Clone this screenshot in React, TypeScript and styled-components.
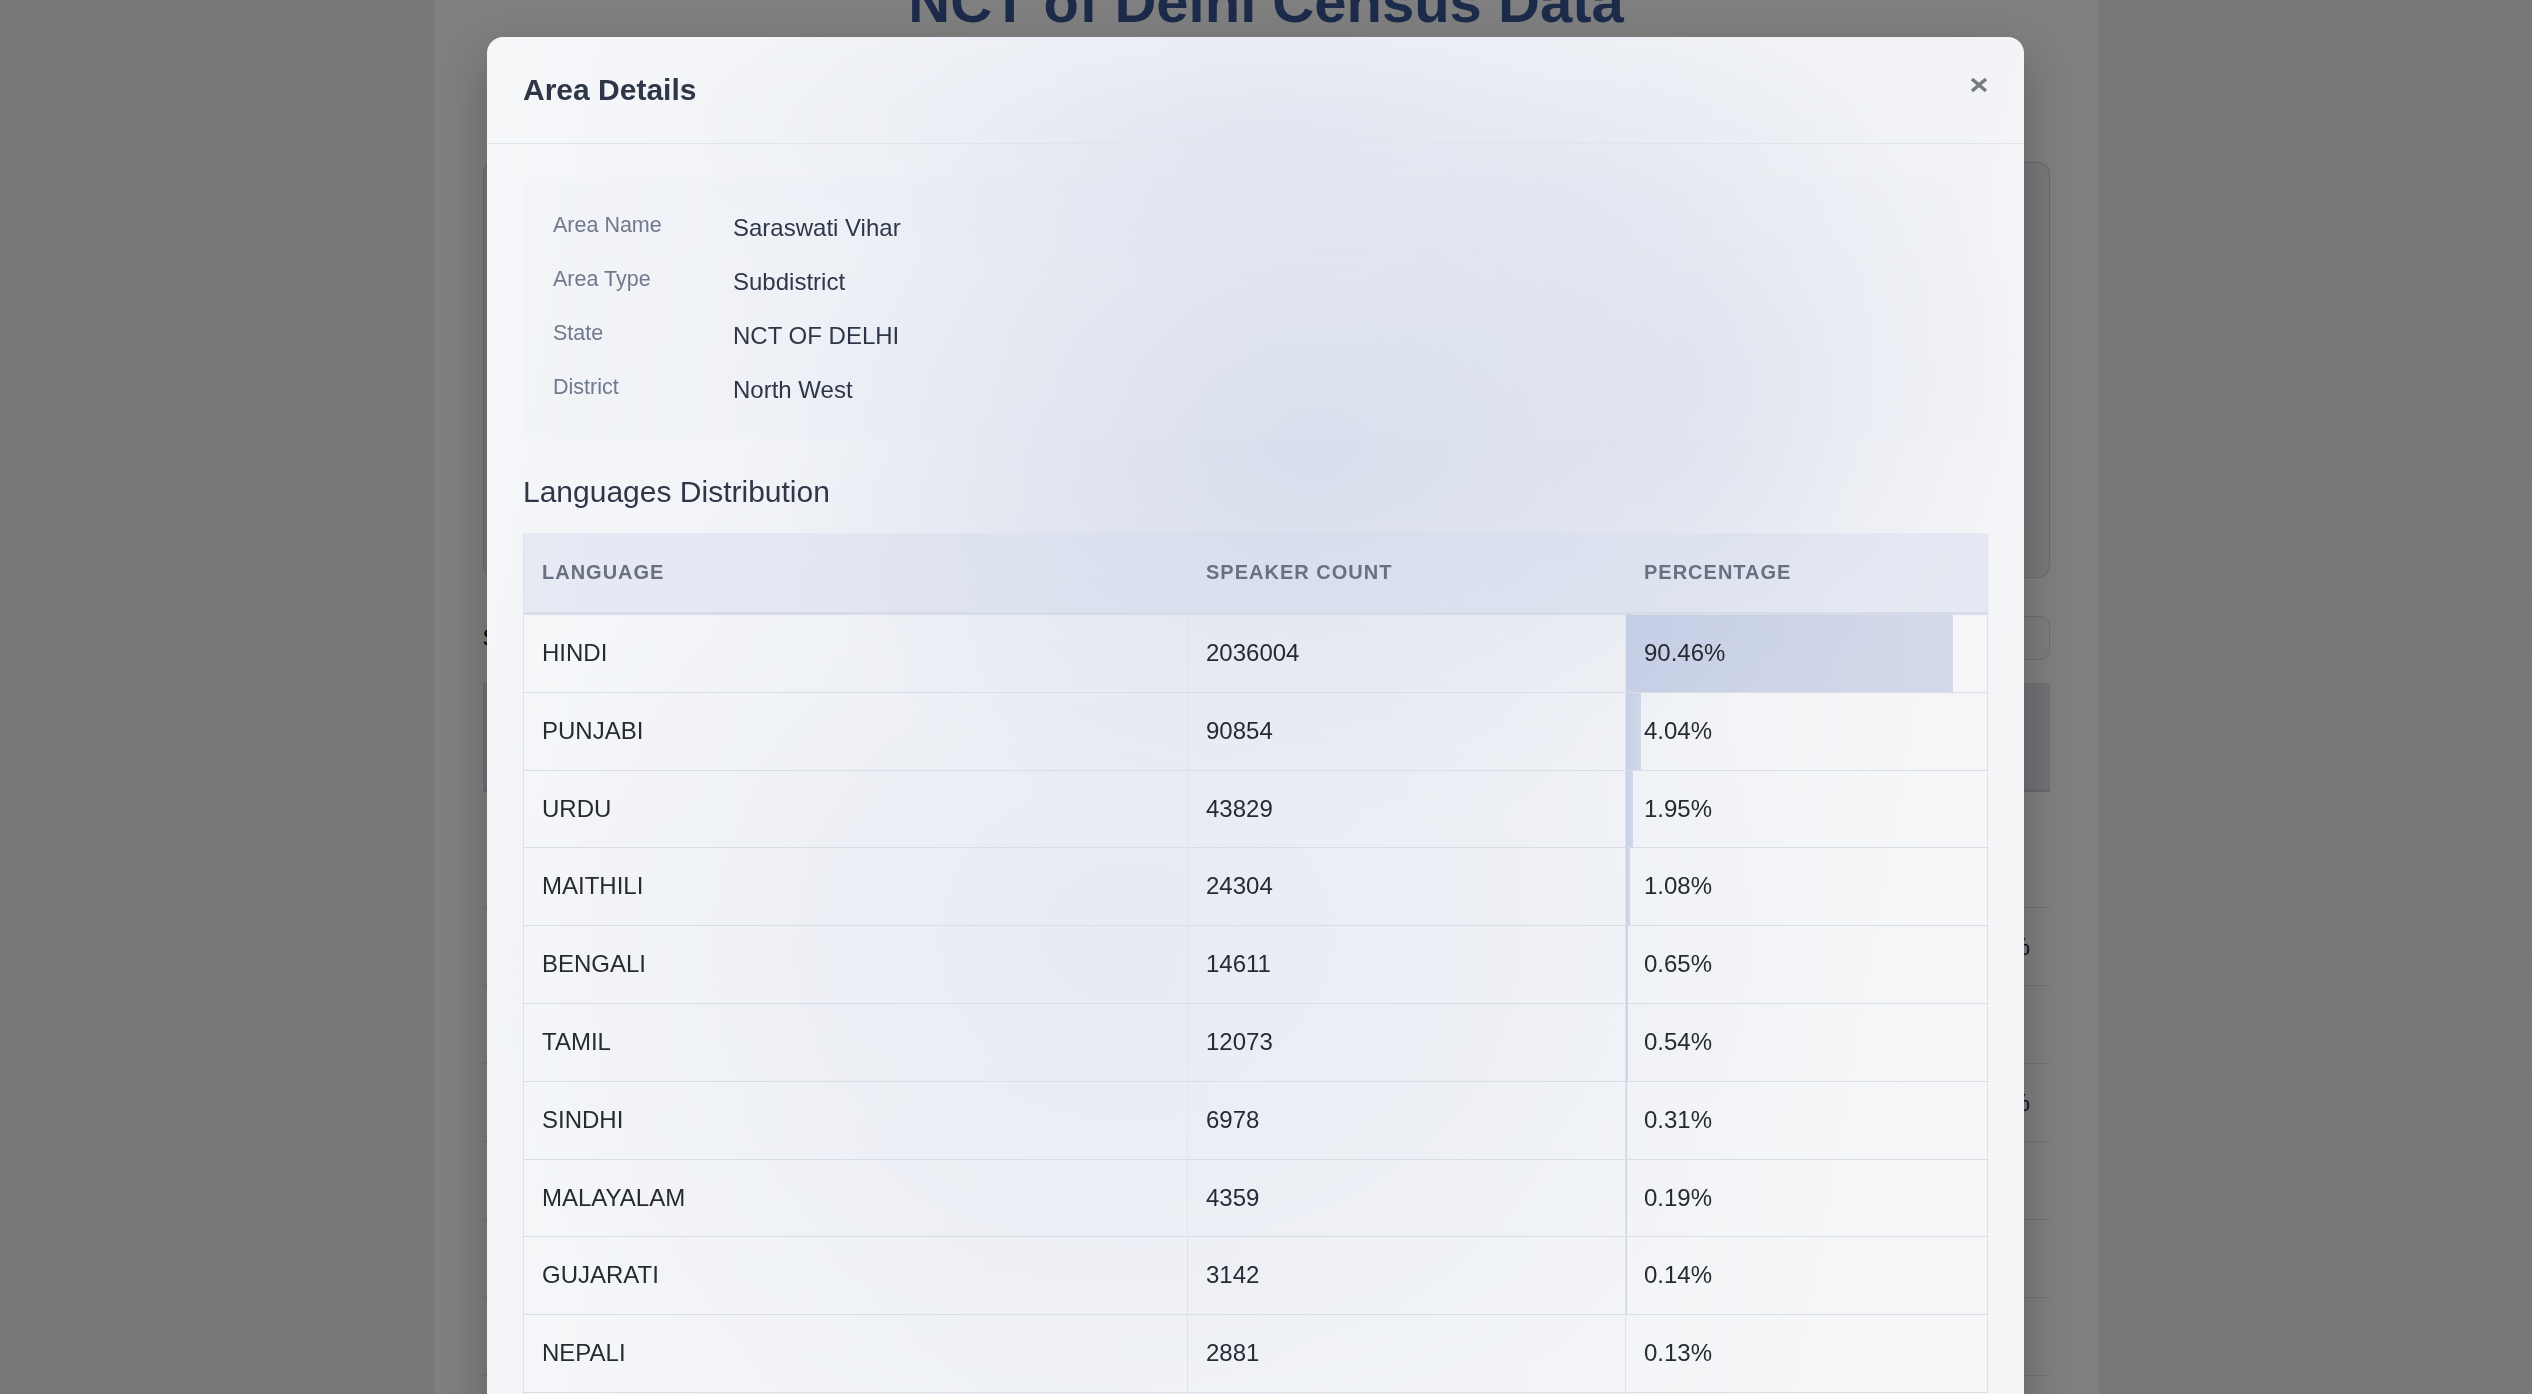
import React from "react";
import styled, { createGlobalStyle } from "styled-components";

const GlobalStyle = createGlobalStyle`
  html, body { margin: 0; padding: 0; height: 100%; overflow: hidden; }
  body {
    font-family: "Liberation Sans", Arial, Helvetica, sans-serif;
    background: #eef0f2;
  }
  * { box-sizing: border-box; }
`;

/* ---------- page behind the modal ---------- */

const Page = styled.div`
  width: 100%;
  height: 100vh;
  overflow: hidden;
  display: flex;
  justify-content: center;
  align-items: flex-start;
  background: linear-gradient(180deg, #eceef2 0%, #f0f0f0 60%, #eeeeef 100%);
`;

const Container = styled.main`
  width: 1665px;
  min-height: 100vh;
  flex-shrink: 0;
  background: #fefefe;
  padding: 0 49px;
  display: flex;
  flex-direction: column;
  & > * { flex-shrink: 0; }
`;

const PageTitle = styled.h1`
  margin: -31px 0 0;
  text-align: center;
  font-size: 58px;
  line-height: 66px;
  font-weight: 700;
  color: #3a5696;
`;

const StatsCard = styled.section`
  margin-top: 127px;
  height: 416px;
  border: 1px solid #d2d5dc;
  border-radius: 12px;
  background: #f1f2f5;
`;

const SearchRow = styled.div`
  margin-top: 38px;
  height: 44px;
  display: flex;
  align-items: center;
  gap: 16px;
`;

const SearchLabel = styled.span`
  font-size: 24px;
  color: #111;
`;

const SearchBox = styled.div`
  flex: 1;
  height: 44px;
  border: 1px solid #d6d9df;
  border-radius: 10px;
  background: #fbfbfc;
`;

const BgTable = styled.div`
  margin-top: 23px;
  display: flex;
  flex-direction: column;
`;

const BgHead = styled.div`
  height: 109px;
  background: #e3e5eb;
  border-bottom: 3px solid #d3d6dc;
`;

const BgRow = styled.div<{ $tall?: boolean }>`
  height: ${(p) => (p.$tall ? "116px" : "78px")};
  border-bottom: 1px solid #e2e4e8;
  display: grid;
  grid-template-columns: 1fr 119px;
  align-items: center;
  font-size: 24px;
  color: #222;
`;

const BgCell = styled.span`
  padding-left: 18px;
`;

/* ---------- modal ---------- */

const Overlay = styled.div`
  position: fixed;
  inset: 0;
  background: rgba(0, 0, 0, 0.5);
  display: flex;
  align-items: flex-start;
  justify-content: flex-start;
  padding: 37px 0 0 487px;
  overflow: hidden;
`;

const Modal = styled.div`
  width: 1537px;
  flex-shrink: 0;
  border-radius: 16px 16px 0 0;
  overflow: hidden;
  display: flex;
  flex-direction: column;
  box-shadow: 0 20px 50px rgba(0, 0, 0, 0.25);
  background:
    radial-gradient(ellipse 36% 26% at 54% 26%, rgba(206, 213, 232, 0.7), rgba(206, 213, 232, 0) 100%),
    radial-gradient(ellipse 22% 22% at 78% 22%, rgba(214, 220, 236, 0.5), rgba(214, 220, 236, 0) 100%),
    radial-gradient(ellipse 45% 35% at 42% 58%, rgba(214, 220, 236, 0.5), rgba(214, 220, 236, 0) 100%),
    radial-gradient(ellipse 40% 10% at 50% 6%, rgba(228, 232, 242, 0.8), rgba(228, 232, 242, 0) 100%),
    linear-gradient(100deg, #f6f7f9 0%, #eef0f5 40%, #eff1f5 65%, #f6f6f8 100%);
`;

const Header = styled.header`
  display: flex;
  justify-content: space-between;
  align-items: flex-start;
  padding: 36px;
  border-bottom: 1px solid #e1e4ea;
`;

const Title = styled.h2`
  margin: 0;
  font-size: 30px;
  line-height: 34px;
  font-weight: 700;
  color: #2d3748;
`;

const CloseButton = styled.button`
  margin-top: 4px;
  width: 18px;
  height: 16px;
  padding: 0;
  border: none;
  background: none;
  color: #777a7e;
  cursor: pointer;
  display: flex;
`;

const Body = styled.div`
  padding: 34px 36px 36px;
  display: flex;
  flex-direction: column;
`;

const InfoBox = styled.div`
  padding: 36px 30px;
  border-radius: 12px;
  background: linear-gradient(90deg, rgba(234, 238, 246, 0.25) 0%, rgba(222, 228, 241, 0.3) 60%, rgba(236, 238, 244, 0.2) 100%);
  display: grid;
  grid-template-columns: 180px 1fr;
  row-gap: 27px;
  align-items: start;
`;

const InfoLabel = styled.span`
  font-size: 21.5px;
  line-height: 23px;
  color: #6f7a8c;
`;

const InfoValue = styled.span`
  font-size: 24px;
  line-height: 27px;
  color: #2d3748;
`;

const SectionTitle = styled.h3`
  margin: 36px 0 24px;
  font-size: 30px;
  line-height: 34px;
  font-weight: 400;
  color: #2d3748;
`;

const Table = styled.table`
  width: 100%;
  border-collapse: separate;
  border-spacing: 0;
  table-layout: fixed;
  border-left: 1px solid #dde1e8;
  border-right: 1px solid #dde1e8;
`;

const Th = styled.th`
  padding: 24px 18px;
  line-height: 31px;
  text-align: left;
  font-size: 20px;
  font-weight: 700;
  text-transform: uppercase;
  letter-spacing: 1px;
  color: #687181;
  background: rgba(212, 219, 238, 0.45);
  border-bottom: 3px solid #d6dce8;
  border-right: 1px solid #dfe3ea;
  &:last-child { border-right: none; }
`;

const Td = styled.td`
  position: relative;
  padding: 24px 18px;
  line-height: 28.8px;
  font-size: 24px;
  color: #262b33;
  background: rgba(255, 255, 255, 0.2);
  border-bottom: 1px solid #d8dde6;
  border-right: 1px solid #dfe3ea;
  &:last-child { border-right: none; }
`;

const Bar = styled.span`
  position: absolute;
  left: 0;
  top: 0;
  bottom: 0;
  background: linear-gradient(90deg, rgba(160, 175, 215, 0.5), rgba(165, 178, 214, 0.42));
`;

const CellText = styled.span`
  position: relative;
`;

const info = [
  ["Area Name", "Saraswati Vihar"],
  ["Area Type", "Subdistrict"],
  ["State", "NCT OF DELHI"],
  ["District", "North West"],
];

const languages: [string, number, number][] = [
  ["HINDI", 2036004, 90.46],
  ["PUNJABI", 90854, 4.04],
  ["URDU", 43829, 1.95],
  ["MAITHILI", 24304, 1.08],
  ["BENGALI", 14611, 0.65],
  ["TAMIL", 12073, 0.54],
  ["SINDHI", 6978, 0.31],
  ["MALAYALAM", 4359, 0.19],
  ["GUJARATI", 3142, 0.14],
  ["NEPALI", 2881, 0.13],
  ["MARATHI", 2512, 0.11],
  ["ODIA", 1987, 0.09],
];

const bgRows = ["", "10.15%", "5%", "12.42%", "2%", "", "", ""];

export default function App() {
  return (
    <>
      <GlobalStyle />
      <Page>
        <Container>
          <PageTitle>NCT of Delhi Census Data</PageTitle>
          <StatsCard />
          <SearchRow>
            <SearchLabel>Search</SearchLabel>
            <SearchBox />
          </SearchRow>
          <BgTable>
            <BgHead />
            {bgRows.map((v, i) => (
              <BgRow key={i} $tall={i === 0}>
                <span />
                <BgCell>{v}</BgCell>
              </BgRow>
            ))}
          </BgTable>
        </Container>
      </Page>
      <Overlay>
        <Modal role="dialog" aria-label="Area Details">
          <Header>
            <Title>Area Details</Title>
            <CloseButton aria-label="Close">
              <svg width="18" height="16" viewBox="0 0 18 16">
                <path d="M2 2 L16 14 M16 2 L2 14" stroke="currentColor" strokeWidth="3.6" strokeLinecap="butt" />
              </svg>
            </CloseButton>
          </Header>
          <Body>
            <InfoBox>
              {info.map(([k, v]) => (
                <React.Fragment key={k}>
                  <InfoLabel>{k}</InfoLabel>
                  <InfoValue>{v}</InfoValue>
                </React.Fragment>
              ))}
            </InfoBox>
            <SectionTitle>Languages Distribution</SectionTitle>
            <Table>
              <colgroup>
                <col style={{ width: 664 }} />
                <col style={{ width: 438 }} />
                <col />
              </colgroup>
              <thead>
                <tr>
                  <Th>Language</Th>
                  <Th>Speaker Count</Th>
                  <Th>Percentage</Th>
                </tr>
              </thead>
              <tbody>
                {languages.map(([name, count, pct]) => (
                  <tr key={name}>
                    <Td>{name}</Td>
                    <Td>{count}</Td>
                    <Td>
                      <Bar style={{ width: `${pct}%` }} />
                      <CellText>{pct.toFixed(2)}%</CellText>
                    </Td>
                  </tr>
                ))}
              </tbody>
            </Table>
          </Body>
        </Modal>
      </Overlay>
    </>
  );
}
